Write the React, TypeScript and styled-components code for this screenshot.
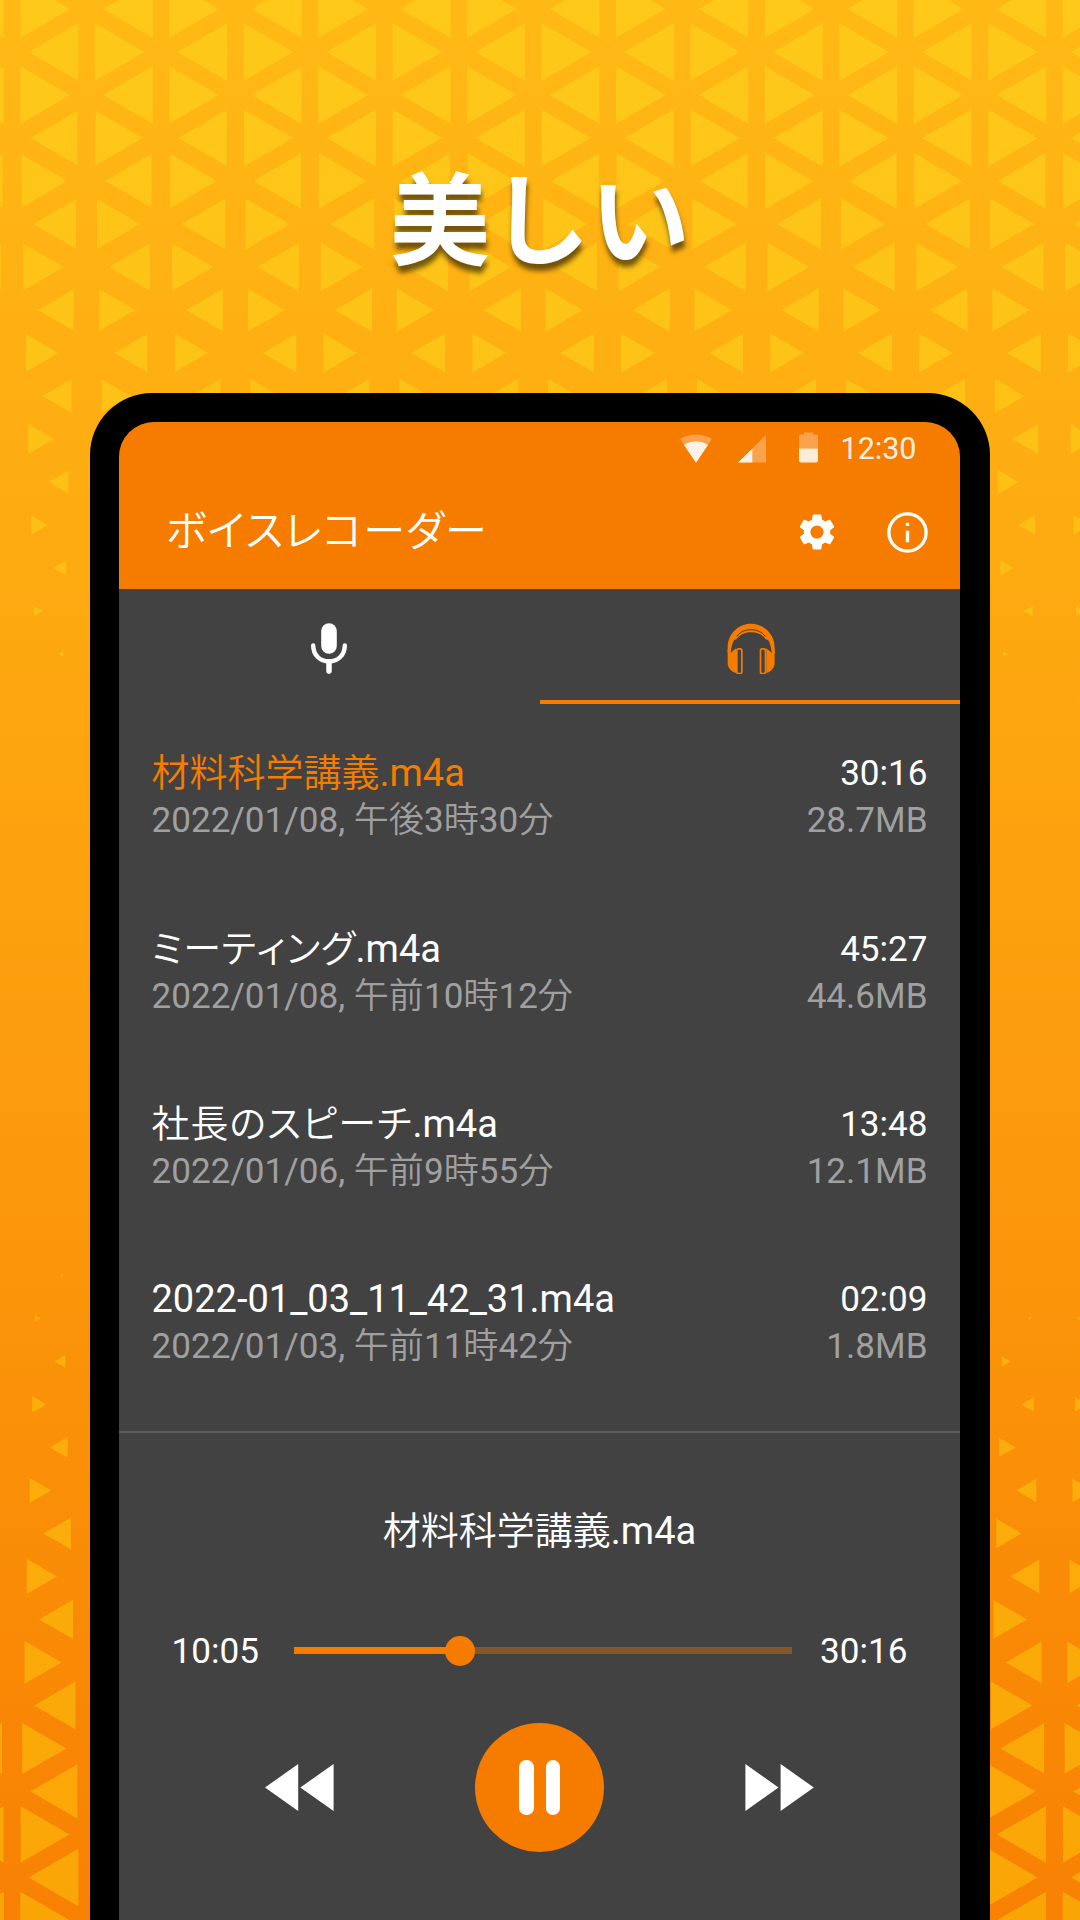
import React from "react";
import styled, { createGlobalStyle } from "styled-components";
import { MdSettings } from "react-icons/md";

const ORANGE = "#f67c00";
const SURFACE = "#424242";
const FONT = `Roboto, "Noto Sans CJK JP DemiLight", "Noto Sans CJK JP", sans-serif`;

const GlobalStyle = createGlobalStyle`
  *, *::before, *::after { box-sizing: border-box; }
  html, body { margin: 0; padding: 0; }
  body {
    font-family: ${FONT};
    font-feature-settings: "palt", "kern" 0;
    font-kerning: none;
    overflow: hidden;
  }
`;

/* ---------- background ---------- */

const Page = styled.main`
  position: relative;
  width: 1080px;
  height: 1920px;
  overflow: hidden;
  display: flex;
  flex-direction: column;
  align-items: center;
  background: linear-gradient(#ffb915, #fc9f0d 50%, #f88103);
`;

const PatternSvg = styled.svg`
  position: absolute;
  inset: 0;
`;

const LINE_X = 12.1;
const COLUMN = 74.45;
const ROW = 43;

type RowSpec = { y: number; left: number; right: number; odd: boolean };

const TOP: [number, number][] = [
  [57.3, 57.3], [57.3, 57.3], [57.3, 57.3], [54, 57], [52.3, 55.3],
  [49.5, 51], [46.5, 48.3], [41.3, 43], [37.3, 38.8], [33.6, 34.2],
  [29.8, 29.8], [23, 24], [19.2, 19.4], [15.2, 15.2], [10.7, 10.7],
  [5, 5], [1.3, 1.3],
];
const BOTTOM: [number, number][] = [
  [3, 1], [6.2, 4], [12.5, 10], [16.5, 14.3], [21, 18.8], [25, 23.2],
  [32, 29], [35, 33.5], [39.3, 38.4], [43, 41.5], [47.8, 47.6],
  [51, 50.4], [54, 53.4], [56.3, 56.5], [57.5, 56.8], [57.5, 57.3],
];

const rows: RowSpec[] = [
  ...TOP.map(([left, right], i) => ({ y: 9 + ROW * i, left, right, odd: i % 2 === 1 })),
  ...BOTTOM.map(([left, right], i) => ({ y: 1275.4 + ROW * i, left, right, odd: i % 2 === 0 })),
];

function trianglePath() {
  let d = "";
  for (const row of rows) {
    const top = row.y < 900;
    for (let k = row.odd ? -1 : 0; k < 17; k += 2) {
      const line = LINE_X + COLUMN * k;
      for (const dir of [-1, 1]) {
        const cx = line + (dir * COLUMN) / 3;
        const t = Math.max(0, Math.min(1, top ? (cx - 60) / 240 : cx / 1040));
        const side = row.left + (row.right - row.left) * t;
        const r = side / Math.sqrt(3);
        const base = cx - (dir * r) / 2;
        const tip = cx + dir * r;
        d += `M${base.toFixed(2)} ${(row.y - side / 2).toFixed(2)}V${(row.y + side / 2).toFixed(2)}L${tip.toFixed(2)} ${row.y}Z`;
      }
    }
  }
  return d;
}

const Pattern = () => (
  <PatternSvg width="1080" height="1920" viewBox="0 0 1080 1920" aria-hidden="true">
    <defs>
      <linearGradient id="tri" x1="0" y1="0" x2="0" y2="1920" gradientUnits="userSpaceOnUse">
        <stop offset="0" stopColor="#fec91a" />
        <stop offset="1" stopColor="#faa506" />
      </linearGradient>
    </defs>
    <path d={trianglePath()} fill="url(#tri)" />
  </PatternSvg>
);

/* ---------- headline ---------- */

const Headline = styled.h1`
  position: relative;
  margin: 0;
  height: 393px;
  padding-top: 140px;
  font-family: "Noto Sans CJK JP", sans-serif;
  font-feature-settings: normal;
  font-weight: 700;
  font-size: 100px;
  line-height: 148px;
  color: #fff;
  text-shadow: 1px 7px 5px rgba(0, 0, 0, 0.55);
`;

/* ---------- phone ---------- */

const Phone = styled.section`
  position: relative;
  flex: 1;
  width: 900px;
  padding: 29px 30px 0 29px;
  background: #000;
  border-radius: 62px 62px 0 0;
  display: flex;
`;

const Screen = styled.div`
  flex: 1;
  display: flex;
  flex-direction: column;
  background: ${SURFACE};
  border-radius: 35px 35px 0 0;
  overflow: hidden;
`;

const TopBar = styled.header`
  height: 167px;
  background: ${ORANGE};
  color: #fff;
`;

const StatusBar = styled.div`
  height: 52px;
  padding-right: 43.5px;
  display: flex;
  align-items: center;
  justify-content: flex-end;
`;

const Clock = styled.span`
  margin-left: 22px;
  padding-top: 1px;
  font-size: 30.5px;
  line-height: 36px;
  color: rgba(255, 255, 255, 0.9);
`;

const AppBar = styled.div`
  height: 114px;
  padding: 2px 32.5px 0 47px;
  display: flex;
  align-items: center;
`;

const AppTitle = styled.h2`
  margin: 0;
  flex: 1;
  font-weight: 400;
  font-size: 42px;
  line-height: 60px;
  letter-spacing: 1.05px;
`;

const IconButton = styled.button<{ $size: number }>`
  width: ${(p) => p.$size}px;
  height: ${(p) => p.$size}px;
  padding: 0;
  border: 0;
  background: none;
  color: #fff;
  display: flex;
  align-items: center;
  justify-content: center;

  & + & {
    margin-left: 48px;
  }
`;

/* ---------- tabs ---------- */

const Tabs = styled.nav`
  height: 114.7px;
  display: grid;
  grid-template-columns: 1fr 1fr;
`;

const Tab = styled.button<{ $active?: boolean }>`
  padding: 8px 0 0 ${(p) => (p.$active ? 2 : 0)}px;
  border: 0;
  border-bottom: 4.5px solid ${(p) => (p.$active ? ORANGE : "transparent")};
  background: none;
  color: ${(p) => (p.$active ? ORANGE : "#fff")};
  display: flex;
  align-items: center;
  justify-content: center;
`;

/* ---------- recordings ---------- */

const List = styled.ul`
  height: 729px;
  margin: 0;
  padding: 45.5px 32.5px 0 32.5px;
  list-style: none;
  border-bottom: 2px solid #5c5c5c;
`;

const Row = styled.li`
  height: 175.4px;
  display: flex;
  justify-content: space-between;
`;

const Column = styled.div<{ $end?: boolean }>`
  display: flex;
  flex-direction: column;
  align-items: ${(p) => (p.$end ? "flex-end" : "flex-start")};
`;

const Name = styled.span<{ $active?: boolean }>`
  font-size: 38px;
  line-height: 48px;
  color: ${(p) => (p.$active ? ORANGE : "#fff")};
`;

const Stem = styled.span<{ $tracking: number }>`
  letter-spacing: ${(p) => p.$tracking}px;
`;

const Duration = styled.span`
  font-size: 35.1px;
  line-height: 48px;
  color: #fff;
`;

const Meta = styled.span`
  font-size: 35.1px;
  line-height: 47.5px;
  color: #a0a0a0;
`;

/* ---------- player ---------- */

const Player = styled.footer`
  flex: 1;
  padding-top: 74px;
  display: flex;
  flex-direction: column;
`;

const NowPlaying = styled.div`
  text-align: center;
  font-size: 38px;
  line-height: 48px;
  color: #fff;
`;

const Progress = styled.div`
  margin-top: 72px;
  height: 48px;
  padding-left: 52.5px;
  display: flex;
  align-items: center;
`;

const Elapsed = styled(Duration)`
  width: 122.5px;
`;

const Total = styled(Duration)`
  padding-left: 28px;
`;

const Track = styled.div`
  width: 498px;
  height: 6.4px;
  background: #83572a;
  display: flex;
  align-items: center;
`;

const Played = styled.div`
  height: 100%;
  background: ${ORANGE};
`;

const Knob = styled.div`
  flex: none;
  width: 30px;
  height: 30px;
  margin-left: -15px;
  border-radius: 50%;
  background: ${ORANGE};
`;

const Controls = styled.div`
  margin-top: 48px;
  padding: 0 145.5px 0 146px;
  display: flex;
  align-items: center;
  justify-content: space-between;
`;

const SkipButton = styled.button`
  padding: 0;
  border: 0;
  background: none;
  display: flex;
`;

const PauseButton = styled.button`
  width: 129.4px;
  height: 129.4px;
  padding: 0;
  border: 0;
  border-radius: 50%;
  background: ${ORANGE};
  display: flex;
  align-items: center;
  justify-content: center;
  gap: 11.8px;
`;

const PauseBar = styled.i`
  width: 14.5px;
  height: 55px;
  border-radius: 7.25px;
  background: #fff;
`;

/* ---------- icons ---------- */

const StatusIcons = () => (
  <svg width="139" height="32" viewBox="680 431.5 139 32" fill="#fff">
    <path opacity=".3" d="M696 462.3 680.2 438.6C689 432.4 703 432.4 711.8 438.6Z" />
    <path opacity=".86" d="M696 462.3 684 444.4C691 439.8 701 439.8 708 444.4Z" />
    <path opacity=".3" d="M738 462H766V434.5Z" />
    <path opacity=".86" d="M738 462H752.3V448.2Z" />
    <path opacity=".3" d="M799 448V436a2 2 0 0 1 2-2h3v-2h9v2h3a2 2 0 0 1 2 2v12Z" />
    <path opacity=".86" d="M799 448h19v12a2 2 0 0 1-2 2h-15a2 2 0 0 1-2-2Z" />
  </svg>
);

const InfoIcon = () => (
  <svg width="41" height="41" viewBox="0 0 41 41" fill="none">
    <circle cx="20.5" cy="20.5" r="18.6" stroke="#fff" strokeWidth="3.3" />
    <path d="M18.8 10.7h3.4v3.3h-3.4zM18.8 18.7h3.4v11.6h-3.4z" fill="#fff" />
  </svg>
);

const MicIcon = () => (
  <svg width="36" height="51" viewBox="0 0 36 51" fill="none">
    <rect x="10.2" y="0.2" width="15.6" height="30.6" rx="7.8" fill="#fff" />
    <path
      d="M2.2 22.4C2.2 32 9 38.3 18 38.3S33.8 32 33.8 22.4M18 38.3V48.2"
      stroke="#fff"
      strokeWidth="4.4"
      strokeLinecap="round"
    />
    <path d="M18 40V48" stroke="#fff" strokeWidth="5.4" strokeLinecap="round" />
  </svg>
);

const HeadphonesIcon = () => (
  <svg width="48" height="51.4" viewBox="50 22 144 154" fill={ORANGE}>
    <path d="M52 112V96C52 54 84 24 122 24S193 54 193 96V112L184 110C182 96 179 82 174 74L165 70C157 57 141 50 122 50S88 57 79 70L71 74C66 82 63 96 61 110Z" />
    <path d="M79 62C90 48 105 42 122 42S154 48 165 62" fill="none" stroke={SURFACE} strokeWidth="3" />
    <path d="M52 100 61 111 77 98V172C62 168 52 156 52 142Z" />
    <path d="M193 100 184 111 168 98V172C183 168 193 156 193 142Z" />
    <rect x="79.5" y="99.5" width="15" height="74.5" rx="5" fill={SURFACE} stroke={ORANGE} strokeWidth="5" />
    <rect x="150.5" y="99.5" width="15" height="74.5" rx="5" fill={SURFACE} stroke={ORANGE} strokeWidth="5" />
  </svg>
);

const RewindIcon = () => (
  <svg width="69" height="47" viewBox="0 0 69 47" fill="#fff">
    <path d="M0 23.5 33.2 0V47ZM35.3 23.5 68.6 0V47Z" />
  </svg>
);

const ForwardIcon = () => (
  <svg width="69" height="47" viewBox="0 0 69 47" fill="#fff">
    <path d="M33.5 23.5.4 0V47ZM68.8 23.5 35.6 0V47Z" />
  </svg>
);

/* ---------- data ---------- */

const recordings = [
  { stem: "材料科学講義", tracking: 0, date: "2022/01/08, 午後3時30分", duration: "30:16", size: "28.7MB" },
  { stem: "ミーティング", tracking: 0.55, date: "2022/01/08, 午前10時12分", duration: "45:27", size: "44.6MB" },
  { stem: "社長のスピーチ", tracking: 0.95, date: "2022/01/06, 午前9時55分", duration: "13:48", size: "12.1MB" },
  { stem: "2022-01_03_11_42_31", tracking: 0, date: "2022/01/03, 午前11時42分", duration: "02:09", size: "1.8MB" },
];

const elapsedSeconds = 10 * 60 + 5;
const totalSeconds = 30 * 60 + 16;

export default function App() {
  return (
    <Page lang="ja">
      <GlobalStyle />
      <Pattern />
      <Headline>美しい</Headline>
      <Phone>
        <Screen>
          <TopBar>
            <StatusBar>
              <StatusIcons />
              <Clock>12:30</Clock>
            </StatusBar>
            <AppBar>
              <AppTitle>ボイスレコーダー</AppTitle>
              <IconButton $size={44} aria-label="設定">
                <MdSettings size={44} />
              </IconButton>
              <IconButton $size={41} aria-label="情報">
                <InfoIcon />
              </IconButton>
            </AppBar>
          </TopBar>
          <Tabs>
            <Tab aria-label="録音">
              <MicIcon />
            </Tab>
            <Tab $active aria-label="再生">
              <HeadphonesIcon />
            </Tab>
          </Tabs>
          <List>
            {recordings.map((r, i) => (
              <Row key={r.stem}>
                <Column>
                  <Name $active={i === 0}>
                    <Stem $tracking={r.tracking}>{r.stem}</Stem>.m4a
                  </Name>
                  <Meta>{r.date}</Meta>
                </Column>
                <Column $end>
                  <Duration>{r.duration}</Duration>
                  <Meta>{r.size}</Meta>
                </Column>
              </Row>
            ))}
          </List>
          <Player>
            <NowPlaying>{`${recordings[0].stem}.m4a`}</NowPlaying>
            <Progress>
              <Elapsed>10:05</Elapsed>
              <Track>
                <Played style={{ width: `${(elapsedSeconds / totalSeconds) * 100}%` }} />
                <Knob />
              </Track>
              <Total>30:16</Total>
            </Progress>
            <Controls>
              <SkipButton aria-label="巻き戻し">
                <RewindIcon />
              </SkipButton>
              <PauseButton aria-label="一時停止">
                <PauseBar />
                <PauseBar />
              </PauseButton>
              <SkipButton aria-label="早送り">
                <ForwardIcon />
              </SkipButton>
            </Controls>
          </Player>
        </Screen>
      </Phone>
    </Page>
  );
}
